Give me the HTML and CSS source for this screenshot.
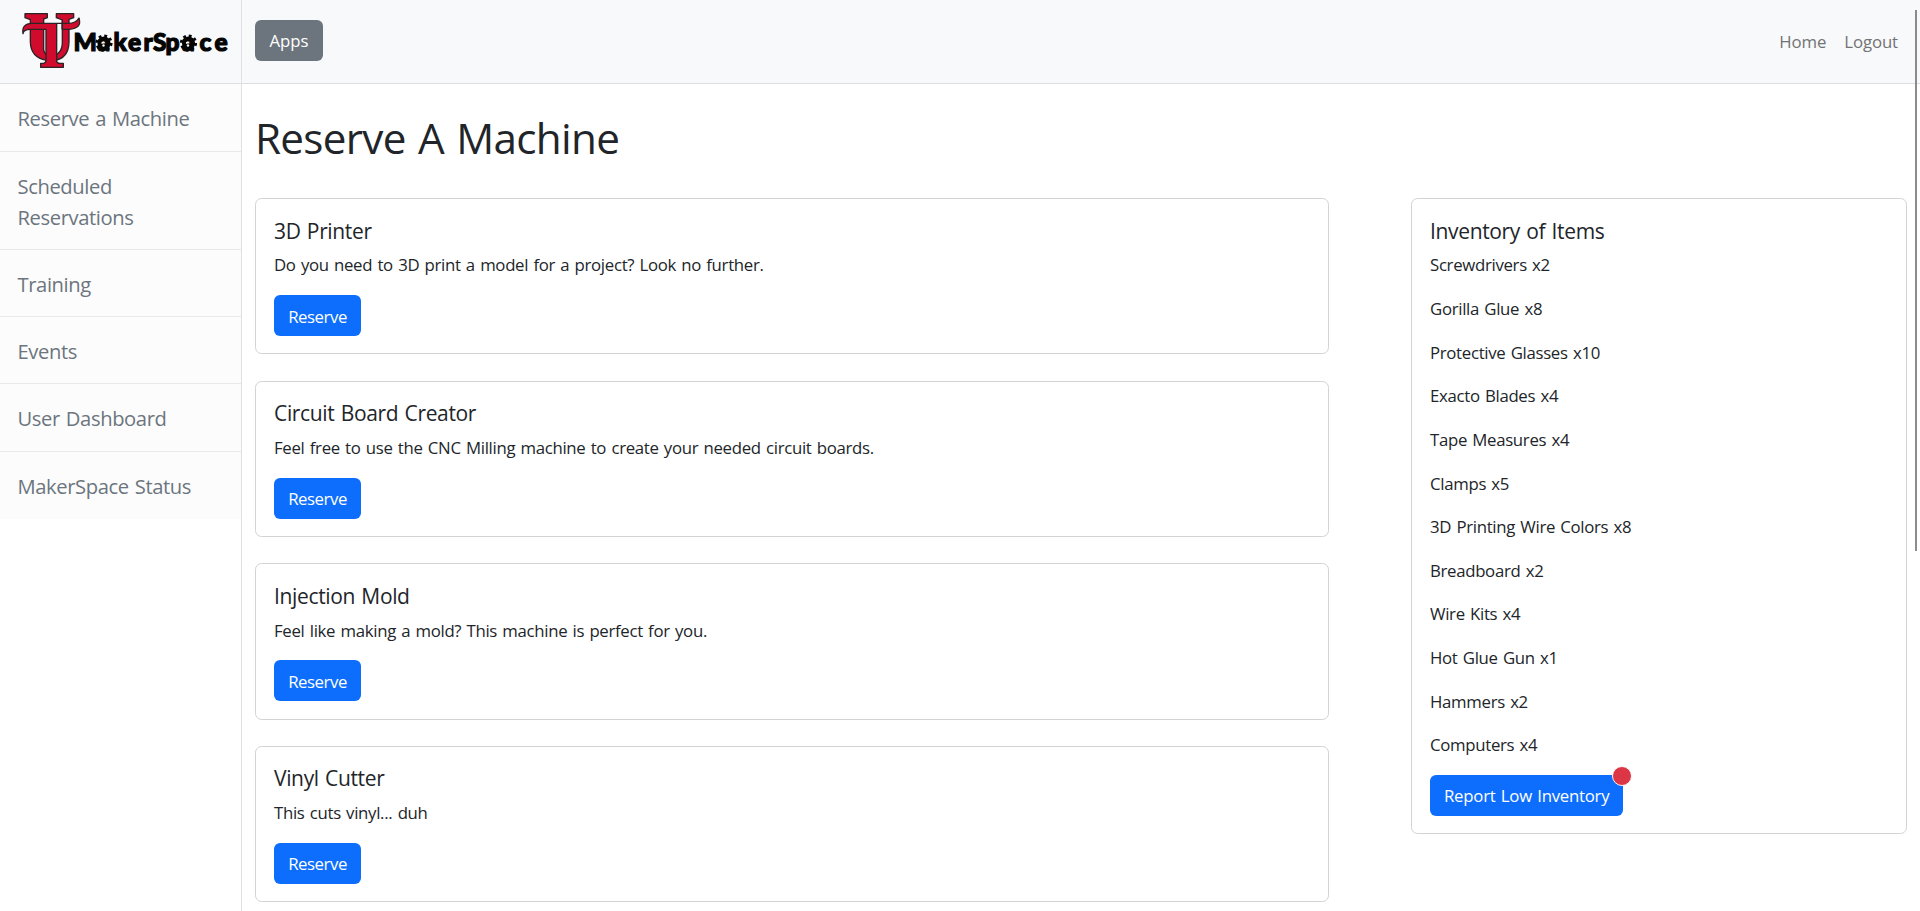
FILE: index.html
```html
<!DOCTYPE html>
<html lang="en">
<head>
<meta charset="utf-8">
<title>Reserve A Machine</title>
<link rel="stylesheet" href="styles.css">
</head>
<body>
<div class="app">
  <aside class="sidebar">
    <div class="brand">
      <svg class="logo" viewBox="0 0 241 83" role="img" aria-label="MakerSpace">
        <g transform="scale(.33333)" fill="#d00b2d" stroke="#2b2326" stroke-width="4" stroke-linejoin="round">
          <path d="M75 41H142V53L131 57V148Q132 160 142 164H166Q186 158 187 130V60L169 53V41H221V53L207 58V125Q206 176 162 181H142Q92 174 91 125V59L75 53Z"/>
          <path d="M69 101Q64 71 96 70H205Q228 70 237 54Q247 86 207 88H187V70H170V184Q171 190 180 190H190V202H122V190H130Q138 189 138 180V88H91Q71 88 69 101Z"/>
          <path d="M187 60V88" fill="none"/>
        </g>
        <g fill="none" stroke="#050505">
          <circle cx="104" cy="43" r="7.2" stroke-width="2.8" stroke-dasharray="2.83 2.83"/>
          <circle cx="188.5" cy="43" r="7.2" stroke-width="2.8" stroke-dasharray="2.83 2.83"/>
          <circle cx="104" cy="43" r="4.6" stroke-width="4"/>
          <circle cx="188.5" cy="43" r="4.6" stroke-width="4"/>
        </g>
        <text class="logo-text" y="51" x="73.5 97.5 113.5 128 143.5 153 165.5 182 199.5 214.5">MakerSpace</text>
        <g fill="#f8f9fa">
          <circle cx="103.5" cy="45.5" r="1.2"/>
          <circle cx="188" cy="45.5" r="1.2"/>
        </g>
      </svg>
    </div>
    <nav class="menu">
      <a class="menu-item">Reserve a Machine</a>
      <a class="menu-item">Scheduled Reservations</a>
      <a class="menu-item">Training</a>
      <a class="menu-item">Events</a>
      <a class="menu-item">User Dashboard</a>
      <a class="menu-item">MakerSpace Status</a>
    </nav>
  </aside>
  <div class="page">
    <header class="topbar">
      <button class="btn btn-secondary">Apps</button>
      <nav class="links"><a>Home</a><a>Logout</a></nav>
    </header>
    <main class="content">
      <h1>Reserve A Machine</h1>
      <div class="columns">
        <section class="machines">
          <article class="card">
            <h5>3D Printer</h5>
            <p>Do you need to 3D print a model for a project? Look no further.</p>
            <button class="btn btn-primary">Reserve</button>
          </article>
          <article class="card">
            <h5>Circuit Board Creator</h5>
            <p>Feel free to use the CNC Milling machine to create your needed circuit boards.</p>
            <button class="btn btn-primary">Reserve</button>
          </article>
          <article class="card">
            <h5>Injection Mold</h5>
            <p>Feel like making a mold? This machine is perfect for you.</p>
            <button class="btn btn-primary">Reserve</button>
          </article>
          <article class="card">
            <h5>Vinyl Cutter</h5>
            <p>This cuts vinyl... duh</p>
            <button class="btn btn-primary">Reserve</button>
          </article>
        </section>
        <aside class="card inventory">
          <h5>Inventory of Items</h5>
          <p>Screwdrivers x2</p>
          <p>Gorilla Glue x8</p>
          <p>Protective Glasses x10</p>
          <p>Exacto Blades x4</p>
          <p>Tape Measures x4</p>
          <p>Clamps x5</p>
          <p>3D Printing Wire Colors x8</p>
          <p>Breadboard x2</p>
          <p>Wire Kits x4</p>
          <p>Hot Glue Gun x1</p>
          <p>Hammers x2</p>
          <p>Computers x4</p>
          <button class="btn btn-primary report">Report Low Inventory<span class="dot"></span></button>
        </aside>
      </div>
    </main>
  </div>
</div>
<div class="scroll-thumb"></div>
</body>
</html>
```
FILE: styles.css
```css
* { box-sizing: border-box; }

body {
  margin: 0;
  height: 911px;
  overflow: hidden;
  background: #fff;
  color: #212529;
  font-family: "Open Sans", "Noto Sans", sans-serif;
  font-size: 16.8px;
  line-height: 26.18px;
  letter-spacing: -0.31px;
  word-spacing: 1.2px;
}

h1, h5, p { margin: 0; font-weight: 400; }

.app { display: flex; height: 911px; }

.sidebar {
  flex: none;
  width: 242px;
  border-right: 1px solid #dee0e2;
}

.brand {
  height: 84px;
  background: #f8f9fa;
  border-bottom: 1px solid #dcdfe2;
}

.logo { display: block; width: 241px; height: 83px; }

.logo-text {
  font: 900 24.5px Lato, sans-serif;
  letter-spacing: 0;
  fill: #050505;
  stroke: #050505;
  stroke-width: 1.2px;
}

.menu-item {
  display: block;
  padding: 19px 17.5px 16.1px;
  border-bottom: 1px solid #e7e9eb;
  background: #fcfcfd;
  color: #6c757d;
  font-size: 20.2px;
  line-height: 31px;
  letter-spacing: -0.4px;
}

.menu-item:first-child { padding-bottom: 17.2px; }
.menu-item:last-child { padding-bottom: 17px; border-bottom: 0; }

.page { flex: 1; min-width: 0; }

.topbar {
  display: flex;
  align-items: center;
  justify-content: space-between;
  height: 84px;
  padding: 0 22px 2px 13px;
  background: #f8f9fa;
  border-bottom: 1px solid #dcdfe2;
}

.links {
  display: flex;
  gap: 18px;
  padding-top: 3px;
  color: #727374;
  letter-spacing: -0.1px;
}

.content { padding: 27px 13px 0; }

h1 {
  height: 87px;
  font-size: 42.2px;
  line-height: 54px;
  letter-spacing: -0.68px;
  word-spacing: 2px;
}

.columns {
  display: flex;
  align-items: flex-start;
  justify-content: space-between;
}

.machines {
  display: flex;
  flex-direction: column;
  gap: 26.2px;
  width: 1074px;
}

.card {
  padding: 18.5px 18px 16px;
  border: 1px solid #d2d3d4;
  border-radius: 6.5px;
  background: #fff;
}

.machines .card { height: 156.4px; }

h5 {
  margin-bottom: 8.7px;
  font-size: 21px;
  line-height: 26.2px;
  letter-spacing: -0.35px;
}

p { margin-bottom: 17.45px; }

.card p:last-of-type { margin-bottom: 16.45px; }

.btn {
  display: block;
  height: 41.3px;
  padding: 2px 14px 0;
  border: 0;
  border-radius: 6px;
  color: #fff;
  font: inherit;
  letter-spacing: inherit;
  word-spacing: inherit;
  white-space: nowrap;
}

.btn-secondary { width: 68px; background: #6c757d; letter-spacing: 0; }
.btn-primary { width: 87px; background: #0d6efd; letter-spacing: -0.45px; }

.inventory { width: 496px; height: 635.6px; }

.report {
  position: relative;
  width: 193px;
  letter-spacing: -0.25px;
}

.dot {
  position: absolute;
  top: -9px;
  right: -9px;
  width: 20px;
  height: 20px;
  border: 1px solid #f8f9fa;
  border-radius: 50%;
  background: #dc3545;
}

.scroll-thumb {
  position: absolute;
  top: 10px;
  left: 1915px;
  width: 2px;
  height: 541px;
  background: #8b8b8b;
}
```
